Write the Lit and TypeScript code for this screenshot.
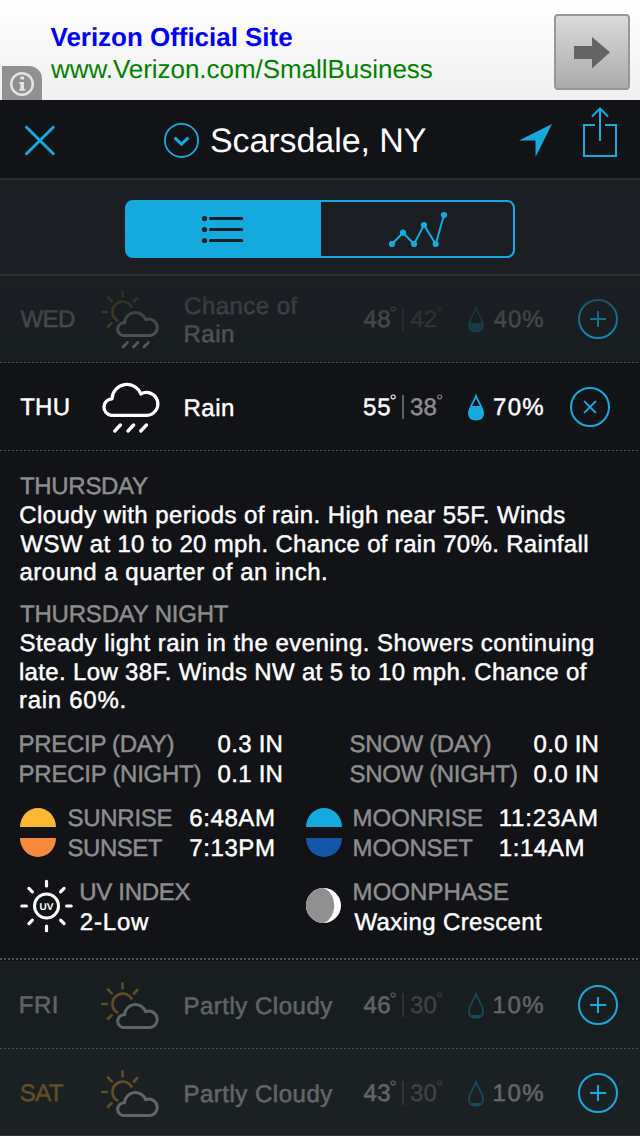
import { LitElement, html, svg, css, nothing } from "lit";
import { customElement, property, state } from "lit/decorators.js";
import { classMap } from "lit/directives/class-map.js";

const BLUE = "#15aade";

/** One line of text, tracked so that its ink fills exactly `w` pixels. */
@customElement("tracked-text")
class TrackedText extends LitElement {
  static styles = css`
    :host {
      display: block;
      white-space: pre;
      flex: none;
    }
    .ink {
      display: block;
    }
  `;
  @property() text = "";
  @property({ type: Number }) w = 0;
  @state() private spacing = 0;
  @state() private shift = 0;

  firstUpdated() {
    const cs = getComputedStyle(this);
    const ctx = document.createElement("canvas").getContext("2d")!;
    // Measured at ten times the size, so that rounding of the ink box does not matter.
    ctx.font = `${cs.fontWeight} ${parseFloat(cs.fontSize) * 10}px ${cs.fontFamily}`;
    const m = ctx.measureText(this.text);
    const ink = (m.actualBoundingBoxLeft + m.actualBoundingBoxRight) / 10;
    const gaps = this.text.length - 1;
    this.spacing = gaps > 0 ? (this.w - ink) / gaps : 0;
    this.shift = m.actualBoundingBoxLeft / 10;
  }

  render() {
    return html`<span
      class="ink"
      style="width:${this.w}px;letter-spacing:${this.spacing}px;text-indent:${this.shift}px"
      >${this.text}</span
    >`;
  }
}

type IconName = "chance" | "rain" | "partly";

const sunCloud = svg`
  <g fill="none" stroke-linecap="round" stroke-linejoin="round">
    <g stroke="#fdb62f" stroke-width="2.7">
      <path d="M132 307.6A10.2 10.2 0 1 0 118.3 321" stroke-linecap="butt" />
      <path d="M122.5 291.6v4.6M108 297.5l3.7 3.9M137.2 298l-3.3 3.5M102.2 312h4.6M108 326.7l3.6-3.6" />
    </g>
    <path stroke="#fff" stroke-width="3"
      d="M123.6 335.6A6.4 6.4 0 0 1 124.6 322.8A10.8 10.8 0 0 1 145.6 319.8A8.3 8.3 0 1 1 150.3 335.6Z" />
  </g>`;

function weatherIcon(name: IconName) {
  if (name === "rain") {
    return html`<svg width="61" height="52" viewBox="100 381 61 52">
      <g fill="none" stroke="#fff" stroke-linejoin="round" stroke-linecap="round">
        <path stroke-width="3.3"
          d="M111 415.3A8.3 8.3 0 0 1 112 398.8A14.9 14.9 0 0 1 140.8 394A11.4 11.4 0 1 1 146.8 415.3Z" />
        <path stroke-width="3.3" d="M114.8 431l5.6-6M128 431l5.6-6M140.8 431l5.6-6" />
      </g>
    </svg>`;
  }
  if (name === "chance") {
    return html`<svg width="61" height="60" viewBox="100 289 61 60">
      ${sunCloud}
      <path fill="none" stroke="#fff" stroke-width="2.8" stroke-linecap="round"
        d="M123 347l4.4-4.4M133.5 347l4.4-4.4M144 347l4.4-4.4" />
    </svg>`;
  }
  return html`<svg width="61" height="49" viewBox="100 289 61 49">${sunCloud}</svg>`;
}

interface Day {
  day: string;
  dayW: number;
  icon: IconName;
  desc: [string, number][];
  hi: string;
  lo: string;
  chance: string;
  level: number;
  open?: boolean;
  weekend?: boolean;
  faded?: boolean;
}

@customElement("day-row")
class DayRow extends LitElement {
  static styles = css`
    :host {
      display: block;
    }
    .row {
      box-sizing: border-box;
      height: 88px;
      display: grid;
      grid-template-columns: 80px 84px 180px 104px 26px 84px 40px;
      align-items: center;
      padding-left: 20px;
      background: #181d20;
      line-height: 28px;
    }
    .open {
      background: #121317;
      grid-template-columns: 80px 84px 180px 104px 26px 75.5px 40px;
    }
    .weekend {
      background: #1b2023;
    }
    .weekend .day {
      color: #fdb62f;
    }
    .dim > :not(.toggle) {
      opacity: 0.31;
    }
    .faded {
      position: relative;
    }
    .faded::after {
      content: "";
      position: absolute;
      inset: 0;
      background: linear-gradient(rgba(27, 31, 36, 0.88), rgba(24, 29, 32, 0));
    }
    svg {
      display: block;
    }
    .day {
      padding: 2px 0 0 0.7px;
    }
    .pct {
      padding: 2px 0 0 0.3px;
    }
    .desc {
      padding: 4px 0 0 1.3px;
    }
    .temps {
      display: flex;
      align-items: center;
    }
    .deg {
      font-size: 18px;
      line-height: 20px;
      margin-bottom: 12px;
      -webkit-text-stroke: 0;
    }
    .num {
      padding-top: 2px;
      margin-right: 1px;
    }
    .hi,
    .lo {
      display: flex;
      align-items: center;
    }
    .lo {
      color: #8e8e8e;
    }
    .bar {
      width: 2px;
      height: 24px;
      margin: 0 7px 0 6px;
      background: #5f6062;
    }
  `;
  @property({ attribute: false }) data!: Day;

  render() {
    const d = this.data;
    return html`<div
      class=${classMap({ row: true, open: !!d.open, dim: !d.open, weekend: !!d.weekend, faded: !!d.faded })}
    >
      <tracked-text class="day" .text=${d.day} .w=${d.dayW}></tracked-text>
      <div>${weatherIcon(d.icon)}</div>
      <div class="desc">
        ${d.desc.map(([t, w]) => html`<tracked-text .text=${t} .w=${w}></tracked-text>`)}
      </div>
      <div class="temps">
        <div class="hi">
          <tracked-text class="num" .text=${d.hi} .w=${25.6}></tracked-text>
          <tracked-text class="deg" text="°" .w=${5.4}></tracked-text>
        </div>
        <div class="bar"></div>
        <div class="lo">
          <tracked-text class="num" .text=${d.lo} .w=${25}></tracked-text>
          <tracked-text class="deg" text="°" .w=${5.4}></tracked-text>
        </div>
      </div>
      <svg width="16" height="27" viewBox="0 0 16 27">
        <clipPath id="fill"><rect y=${d.level} width="16" height="27" /></clipPath>
        <path id="drop" fill="none" stroke=${BLUE} stroke-width="1.8"
          d="M8 2C6.5 7 .9 13.5 .9 19.3C.9 24 4 25.7 8 25.7S15.1 24 15.1 19.3C15.1 13.5 9.5 7 8 2Z" />
        <path fill=${BLUE} clip-path="url(#fill)"
          d="M8 2C6.5 7 .9 13.5 .9 19.3C.9 24 4 25.7 8 25.7S15.1 24 15.1 19.3C15.1 13.5 9.5 7 8 2Z" />
      </svg>
      <tracked-text class="pct" .text=${d.chance} .w=${48.5}></tracked-text>
      <svg class="toggle" width="40" height="40" viewBox="0 0 40 40" fill="none" stroke=${BLUE} stroke-width="2">
        <circle cx="20" cy="20" r="19" />
        ${d.open
          ? svg`<path stroke-linecap="round" d="M14.6 14.6L25.4 25.4M25.4 14.6L14.6 25.4" />`
          : svg`<path d="M12 20H28M20 12V28" />`}
      </svg>
    </div>`;
  }
}

const line = (text: string, w: number, cls = "") =>
  html`<tracked-text class=${cls || nothing} .text=${text} .w=${w}></tracked-text>`;

@customElement("day-detail")
class DayDetail extends LitElement {
  static styles = css`
    :host {
      display: block;
    }
    .detail {
      box-sizing: border-box;
      height: 507px;
      padding: 21px 0 0 20.5px;
      background: #121317;
    }
    .label {
      color: #8e8e8e;
    }
    .head {
      line-height: 29px;
      margin-bottom: 1px;
    }
    .body {
      line-height: 28.6px;
      margin-bottom: 12.2px;
    }
    .body + .pair {
      margin-top: 14.2px;
    }
    .pair {
      display: grid;
      grid-template-columns: 330px 1fr;
      line-height: 30px;
      margin-bottom: 14px;
    }
    .pair.icons {
      grid-template-columns: 285.5px 1fr;
    }
    .stats {
      display: grid;
      grid-template-columns: 198px auto;
      justify-content: start;
    }
    .snow {
      grid-template-columns: 184px auto;
    }
    .times {
      display: grid;
      grid-template-columns: 48.5px 122px auto;
      justify-content: start;
      margin-left: -0.5px;
    }
    .moon {
      grid-template-columns: 49px 146px auto;
    }
    .fact {
      display: grid;
      grid-template-columns: 61px auto;
      justify-content: start;
      align-items: center;
      margin-left: -0.5px;
    }
    .phase {
      grid-template-columns: 49px auto;
    }
    svg {
      display: block;
    }
    .disc {
      margin-top: 4px;
    }
    .rays {
      margin-bottom: 3px;
    }
    .lune {
      margin-bottom: 4px;
    }
    .uv {
      font: bold 10px "Liberation Sans", Arial, sans-serif;
    }
  `;

  private disc(up: string, down: string) {
    return html`<svg class="disc" width="36" height="50" viewBox="0 0 36 50">
      <path fill=${up} d="M0 19A18 19 0 0 1 36 19Z" />
      <path fill=${down} d="M0 30A18 19 0 0 0 36 30Z" />
    </svg>`;
  }

  render() {
    return html`<div class="detail">
      <div class="head label">${line("THURSDAY", 127)}</div>
      <div class="body">
        ${line("Cloudy with periods of rain. High near 55F. Winds", 544)}
        ${line("WSW at 10 to 20 mph. Chance of rain 70%. Rainfall", 566.5)}
        ${line("around a quarter of an inch.", 305)}
      </div>
      <div class="head label">${line("THURSDAY NIGHT", 208)}</div>
      <div class="body">
        ${line("Steady light rain in the evening. Showers continuing", 572.5)}
        ${line("late. Low 38F. Winds NW at 5 to 10 mph. Chance of", 566)}
        ${line("rain 60%.", 103.5)}
      </div>
      <div class="pair">
        <div class="stats">
          ${line("PRECIP (DAY)", 153, "label")}${line("0.3 IN", 62.5)}
          ${line("PRECIP (NIGHT)", 180, "label")}${line("0.1 IN", 62.5)}
        </div>
        <div class="stats snow">
          ${line("SNOW (DAY)", 139.5, "label")}${line("0.0 IN", 62.5)}
          ${line("SNOW (NIGHT)", 166, "label")}${line("0.0 IN", 62.5)}
        </div>
      </div>
      <div class="pair icons">
        <div class="times">
          ${this.disc("#fdb833", "#f68a3c")}
          <div class="label">${line("SUNRISE", 103)}${line("SUNSET", 93.5)}</div>
          <div>${line("6:48AM", 82.5)}${line("7:13PM", 82.5)}</div>
        </div>
        <div class="times moon">
          ${this.disc("#15aade", "#1456a8")}
          <div class="label">${line("MOONRISE", 127.5)}${line("MOONSET", 118)}</div>
          <div>${line("11:23AM", 95.5)}${line("1:14AM", 82)}</div>
        </div>
      </div>
      <div class="pair icons">
        <div class="fact">
          <svg class="rays" width="54" height="54" viewBox="-26.5 -27 54 54">
            <circle r="12" fill="none" stroke="#fff" stroke-width="3" />
            <path stroke="#fff" stroke-width="3.2" stroke-linecap="round"
              d="M0-24.7v4.6M0 24.7v-4.6M-24.7 0h4.6M24.7 0h-4.6M-17.6-17.6l3.5 3.5M17.6-17.6l-3.5 3.5M-17.6 17.6l3.5-3.5M17.6 17.6l-3.5-3.5" />
            <text class="uv" x="0" y="3.6" fill="#fff" text-anchor="middle">UV</text>
          </svg>
          <div>
            <div class="label">${line("UV INDEX", 109)}</div>
            ${line("2-Low", 67.5)}
          </div>
        </div>
        <div class="fact phase">
          <svg class="lune" width="36" height="36" viewBox="0 0 36 36">
            <circle cx="17.5" cy="17.5" r="17.5" fill="#fff" />
            <path fill="#909090" d="M17.5 0A17.5 17.5 0 0 0 17.5 35C24.5 32.5 28.2 25 28.2 17.5S24.5 2.5 17.5 0Z" />
          </svg>
          <div>
            <div class="label">${line("MOONPHASE", 153.5)}</div>
            ${line("Waxing Crescent", 187)}
          </div>
        </div>
      </div>
    </div>`;
  }
}

const WED: Day = {
  day: "WED", dayW: 53.5, icon: "chance", desc: [["Chance of", 112], ["Rain", 47.5]],
  hi: "48", lo: "42", chance: "40%", level: 17, faded: true,
};
const THU: Day = {
  day: "THU", dayW: 47.5, icon: "rain", desc: [["Rain", 47.5]],
  hi: "55", lo: "38", chance: "70%", level: 12, open: true,
};
const FRI: Day = {
  day: "FRI", dayW: 35.5, icon: "partly", desc: [["Partly Cloudy", 147]],
  hi: "46", lo: "30", chance: "10%", level: 23,
};
const SAT: Day = {
  day: "SAT", dayW: 42.3, icon: "partly", desc: [["Partly Cloudy", 147]],
  hi: "43", lo: "30", chance: "10%", level: 23, weekend: true,
};

@customElement("app-root")
class AppRoot extends LitElement {
  static styles = css`
    :host {
      display: flex;
      flex-direction: column;
      width: 640px;
      height: 1136px;
      overflow: hidden;
      background: #121317;
      color: #fff;
      font-family: "Liberation Sans", Arial, sans-serif;
      font-size: 24px;
      -webkit-text-stroke: 0.45px currentColor;
      text-rendering: geometricPrecision;
    }
    :host > * {
      flex: none;
    }
    svg {
      display: block;
    }
    .ad {
      height: 100px;
      display: grid;
      grid-template-columns: 40px 1fr 76px;
      padding: 0 10px 0 2px;
      background: linear-gradient(#fff, #f0f0f0);
      font-size: 26px;
      line-height: 32px;
      -webkit-text-stroke: 0;
    }
    .info {
      align-self: end;
      height: 34px;
      border-top-right-radius: 13px;
      background: #919191;
    }
    .copy {
      padding: 21px 0 0 8.5px;
    }
    .title {
      color: #0000f5;
      font-weight: bold;
    }
    .url {
      color: #008200;
    }
    .go {
      box-sizing: border-box;
      width: 76px;
      height: 76px;
      margin-top: 14px;
      border: 2px solid #979797;
      border-radius: 4px;
      background: linear-gradient(#dadada, #ababab);
    }
    .bar {
      box-sizing: border-box;
      height: 80px;
      display: flex;
      align-items: center;
      padding: 2px 22px 0 24px;
      border-bottom: 2px solid #2e2e2d;
      font-size: 34px;
      line-height: 40px;
      -webkit-text-stroke: 0;
    }
    .place {
      flex: 1;
      display: flex;
      align-items: center;
      gap: 12px;
      padding-left: 107px;
    }
    .name {
      padding-top: 2px;
    }
    .actions {
      display: flex;
      align-items: center;
      gap: 30px;
    }
    .share {
      margin: -8px 0 8px;
    }
    .tabs {
      box-sizing: border-box;
      height: 96px;
      padding: 20px 125px 16px;
      border-bottom: 2px solid #2d302d;
      background: #1b1e23;
      position: relative;
      z-index: 1;
    }
    .seg {
      box-sizing: border-box;
      height: 58px;
      display: grid;
      grid-template-columns: 194px 1fr;
      border: 2px solid #15aade;
      border-radius: 8px;
      overflow: hidden;
      background: linear-gradient(90deg, #15aade 50%, transparent 50%);
    }
    .on {
      background: #15aade;
    }
    .first {
      margin-top: -1px;
    }
    .rule {
      height: 1px;
      margin-top: -1px;
      position: relative;
      background: repeating-linear-gradient(90deg, #505355 0 2px, transparent 2px 4px);
    }
    .thick {
      height: 2px;
      margin: 0 0 1px;
    }
    .end {
      margin-top: -2px;
      background: #303437;
    }
  `;

  render() {
    return html`
      <div class="ad">
        <div class="info">
          <svg width="40" height="34" viewBox="0 0 40 34" fill="none" stroke="#e4e4e4">
            <circle cx="20" cy="18" r="10.8" stroke-width="2.4" />
            <path stroke-width="3.6" d="M20.2 16v8.5M20.2 10.6v3" />
            <path stroke-width="1.6" d="M17 16.8h3.4M17 23.8h6.4" />
          </svg>
        </div>
        <div class="copy">
          <div class="title">${line("Verizon Official Site", 241.5)}</div>
          <div class="url">${line("www.Verizon.com/SmallBusiness", 381.5)}</div>
        </div>
        <div class="go">
          <svg width="72" height="72" viewBox="0 0 72 72">
            <path fill="#646464" d="M18 30H36V21L54 36.3L36 52.5V43H18Z" />
          </svg>
        </div>
      </div>
      <div class="bar">
        <svg width="32" height="32" viewBox="0 0 32 32">
          <path stroke=${BLUE} stroke-width="3" stroke-linecap="round" d="M2.5 3.2L29.3 29.7M29.3 3.2L2.5 29.7" />
        </svg>
        <div class="place">
          <svg width="36" height="36" viewBox="0 0 36 36" fill="none" stroke=${BLUE}>
            <circle cx="18.5" cy="18.4" r="16.6" stroke-width="1.8" />
            <path stroke-width="3" d="M11.6 15.6L18.5 22.2L25.4 15.6" />
          </svg>
          ${line("Scarsdale, NY", 215, "name")}
        </div>
        <div class="actions">
          <svg width="34" height="34" viewBox="0 0 34 34">
            <path fill=${BLUE} d="M34 1L1 17.6H17.5V34Z" />
          </svg>
          <svg class="share" width="36" height="56" viewBox="582 104 36 56" fill="none" stroke=${BLUE} stroke-width="2">
            <path d="M595 125H584V156H616V125H605M600 109V141M592 116.5L600 108.5L608 116.5" />
          </svg>
        </div>
      </div>
      <div class="tabs">
        <div class="seg">
          <div class="on">
            <svg width="194" height="54" viewBox="127 202 194 54">
              <g fill="#1b1e23">
                <circle cx="204.5" cy="218.5" r="2.6" />
                <circle cx="204.5" cy="229.5" r="2.6" />
                <circle cx="204.5" cy="240.5" r="2.6" />
              </g>
              <path stroke="#1b1e23" stroke-width="3" stroke-linecap="round"
                d="M210.5 218.5H241.8M210.5 229.5H241.8M210.5 240.5H241.8" />
            </svg>
          </div>
          <svg width="192" height="54" viewBox="321 202 192 54">
            <path fill="none" stroke=${BLUE} stroke-width="2"
              d="M392 244L403 232.7L414 244L424 225L435.7 244L444 215" />
            ${[[392, 244], [403, 232.7], [414, 244], [424, 225], [435.7, 244], [444, 215]].map(
              ([x, y]) => svg`<circle cx=${x} cy=${y} r="3.1" fill=${BLUE} />`
            )}
          </svg>
        </div>
      </div>
      <day-row class="first" .data=${WED}></day-row>
      <div class="rule"></div>
      <day-row .data=${THU}></day-row>
      <div class="rule"></div>
      <day-detail></day-detail>
      <div class="rule thick"></div>
      <day-row .data=${FRI}></day-row>
      <div class="rule"></div>
      <day-row .data=${SAT}></day-row>
      <div class="rule end"></div>
    `;
  }
}
